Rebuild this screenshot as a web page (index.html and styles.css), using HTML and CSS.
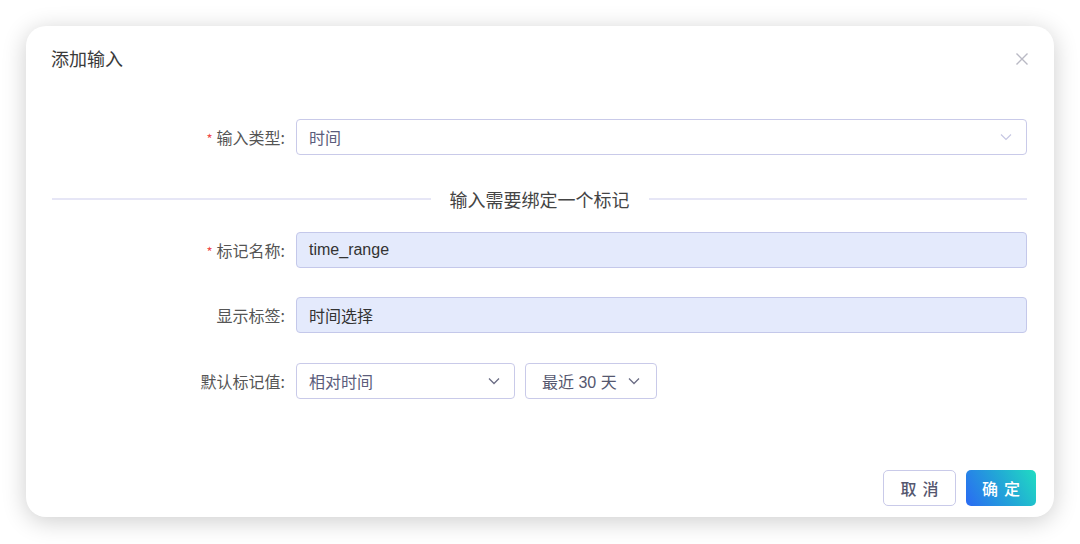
FILE: index.html
```html
<!DOCTYPE html>
<html lang="zh">
<head>
<meta charset="utf-8">
<title>添加输入</title>
<link rel="stylesheet" href="styles.css">
</head>
<body>
<div class="dialog">
  <div class="dialog-header">
    <span class="dialog-title">添加输入</span>
    <svg class="close" width="14" height="14" viewBox="0 0 14 14"><path d="M1.5 1.5 L12.5 12.5 M12.5 1.5 L1.5 12.5" stroke="#b9b9c4" stroke-width="1.4" fill="none"/></svg>
  </div>
  <div class="dialog-body">
    <div class="row">
      <label class="label"><span class="req">*</span>输入类型:</label>
      <div class="control select">
        <span class="value">时间</span>
        <svg class="chev light" width="12" height="8" viewBox="0 0 12 8"><path d="M1 1.5 L6 6.5 L11 1.5" stroke="#c6c7e3" stroke-width="1.2" fill="none"/></svg>
      </div>
    </div>
    <div class="divider">
      <span class="line"></span>
      <span class="divider-text">输入需要绑定一个标记</span>
      <span class="line"></span>
    </div>
    <div class="row">
      <label class="label"><span class="req">*</span>标记名称:</label>
      <div class="control filled"><span class="text">time_range</span></div>
    </div>
    <div class="row">
      <label class="label">显示标签:</label>
      <div class="control filled"><span class="text">时间选择</span></div>
    </div>
    <div class="row">
      <label class="label">默认标记值:</label>
      <div class="control select small">
        <span class="value">相对时间</span>
        <svg class="chev" width="12" height="8" viewBox="0 0 12 8"><path d="M1 1.5 L6 6.5 L11 1.5" stroke="#6b6d85" stroke-width="1.3" fill="none"/></svg>
      </div>
      <div class="control select range">
        <span class="value">最近 30 天</span>
        <svg class="chev" width="12" height="8" viewBox="0 0 12 8"><path d="M1 1.5 L6 6.5 L11 1.5" stroke="#6b6d85" stroke-width="1.3" fill="none"/></svg>
      </div>
    </div>
  </div>
  <div class="dialog-footer">
    <button class="btn cancel">取消</button>
    <button class="btn primary">确定</button>
  </div>
</div>
</body>
</html>
```

FILE: styles.css
```css
* { box-sizing: border-box; }
html, body { margin: 0; padding: 0; background: #ffffff; }
body {
  width: 1080px;
  height: 544px;
  padding: 26px 26px 0 26px;
  font-family: "Liberation Sans", "Noto Sans CJK SC", sans-serif;
  overflow: hidden;
}
.dialog {
  width: 1028px;
  height: 491px;
  background: #fff;
  border-radius: 20px;
  box-shadow: 0 4px 24px rgba(0,0,0,0.2);
  display: flex;
  flex-direction: column;
}
.dialog-header {
  display: flex;
  align-items: center;
  justify-content: space-between;
  padding: 20px 25px 0 25px;
  height: 44px;
}
.dialog-title {
  font-size: 18px;
  line-height: 24px;
  color: #3a3a3a;
  font-family: "Noto Sans CJK SC", sans-serif;
}
.close { margin-top: 2px; }
.dialog-body {
  padding: 49px 27px 0 26px;
  display: flex;
  flex-direction: column;
}
.row {
  display: flex;
  align-items: center;
  height: 36px;
}
.row + .row { margin-top: 29px; }
.row:last-child { margin-top: 30px; }
.label {
  width: 233px;
  flex: none;
  text-align: right;
  margin-right: 11px;
  font-size: 16px;
  color: #555;
  font-family: "Noto Sans CJK SC", sans-serif;
}
.req { color: #ef4b4b; margin-right: 4px; font-size: 13px; }
.control {
  flex: 1;
  height: 36px;
  border: 1px solid #c9cae9;
  border-radius: 4px;
  display: flex;
  align-items: center;
  padding: 0 12px;
  font-size: 16px;
}
.select { justify-content: space-between; padding-right: 14px; }
.select .value { color: #5b5d7c; }
.filled { background: #e4eafc; border-color: #c4c8ea; }
.filled .text { color: #333; }
.small { flex: none; width: 219px; }
.range { flex: none; width: 132px; margin-left: 10px; padding-left: 16px; padding-right: 16px; }
.range .value { color: #55576f; }
.divider {
  display: flex;
  align-items: center;
  height: 24px;
  margin: 32px 0 21px 0;
}
.divider .line {
  flex: 1;
  height: 2px;
  background: #e6e6f6;
}
.divider-text {
  padding: 0 19px;
  font-size: 18px;
  color: #444;
  font-family: "Noto Sans CJK SC", sans-serif;
}
.dialog-footer {
  margin-top: auto;
  display: flex;
  justify-content: flex-end;
  gap: 10px;
  padding: 0 18px 11px 0;
}
.btn {
  height: 36px;
  border-radius: 5px;
  font-size: 16px;
  letter-spacing: 6px;
  font-family: "Noto Sans CJK SC", sans-serif;
  font-weight: 500;
  padding: 0 0 0 6px;
  cursor: pointer;
}
.cancel {
  width: 73px;
  background: #fff;
  border: 1px solid #c9cae9;
  color: #55576f;
}
.primary {
  width: 70px;
  border: none;
  color: #fff;
  background: linear-gradient(60deg, #2a6af3 0%, #22a8d6 55%, #20dcc2 100%);
}
```
